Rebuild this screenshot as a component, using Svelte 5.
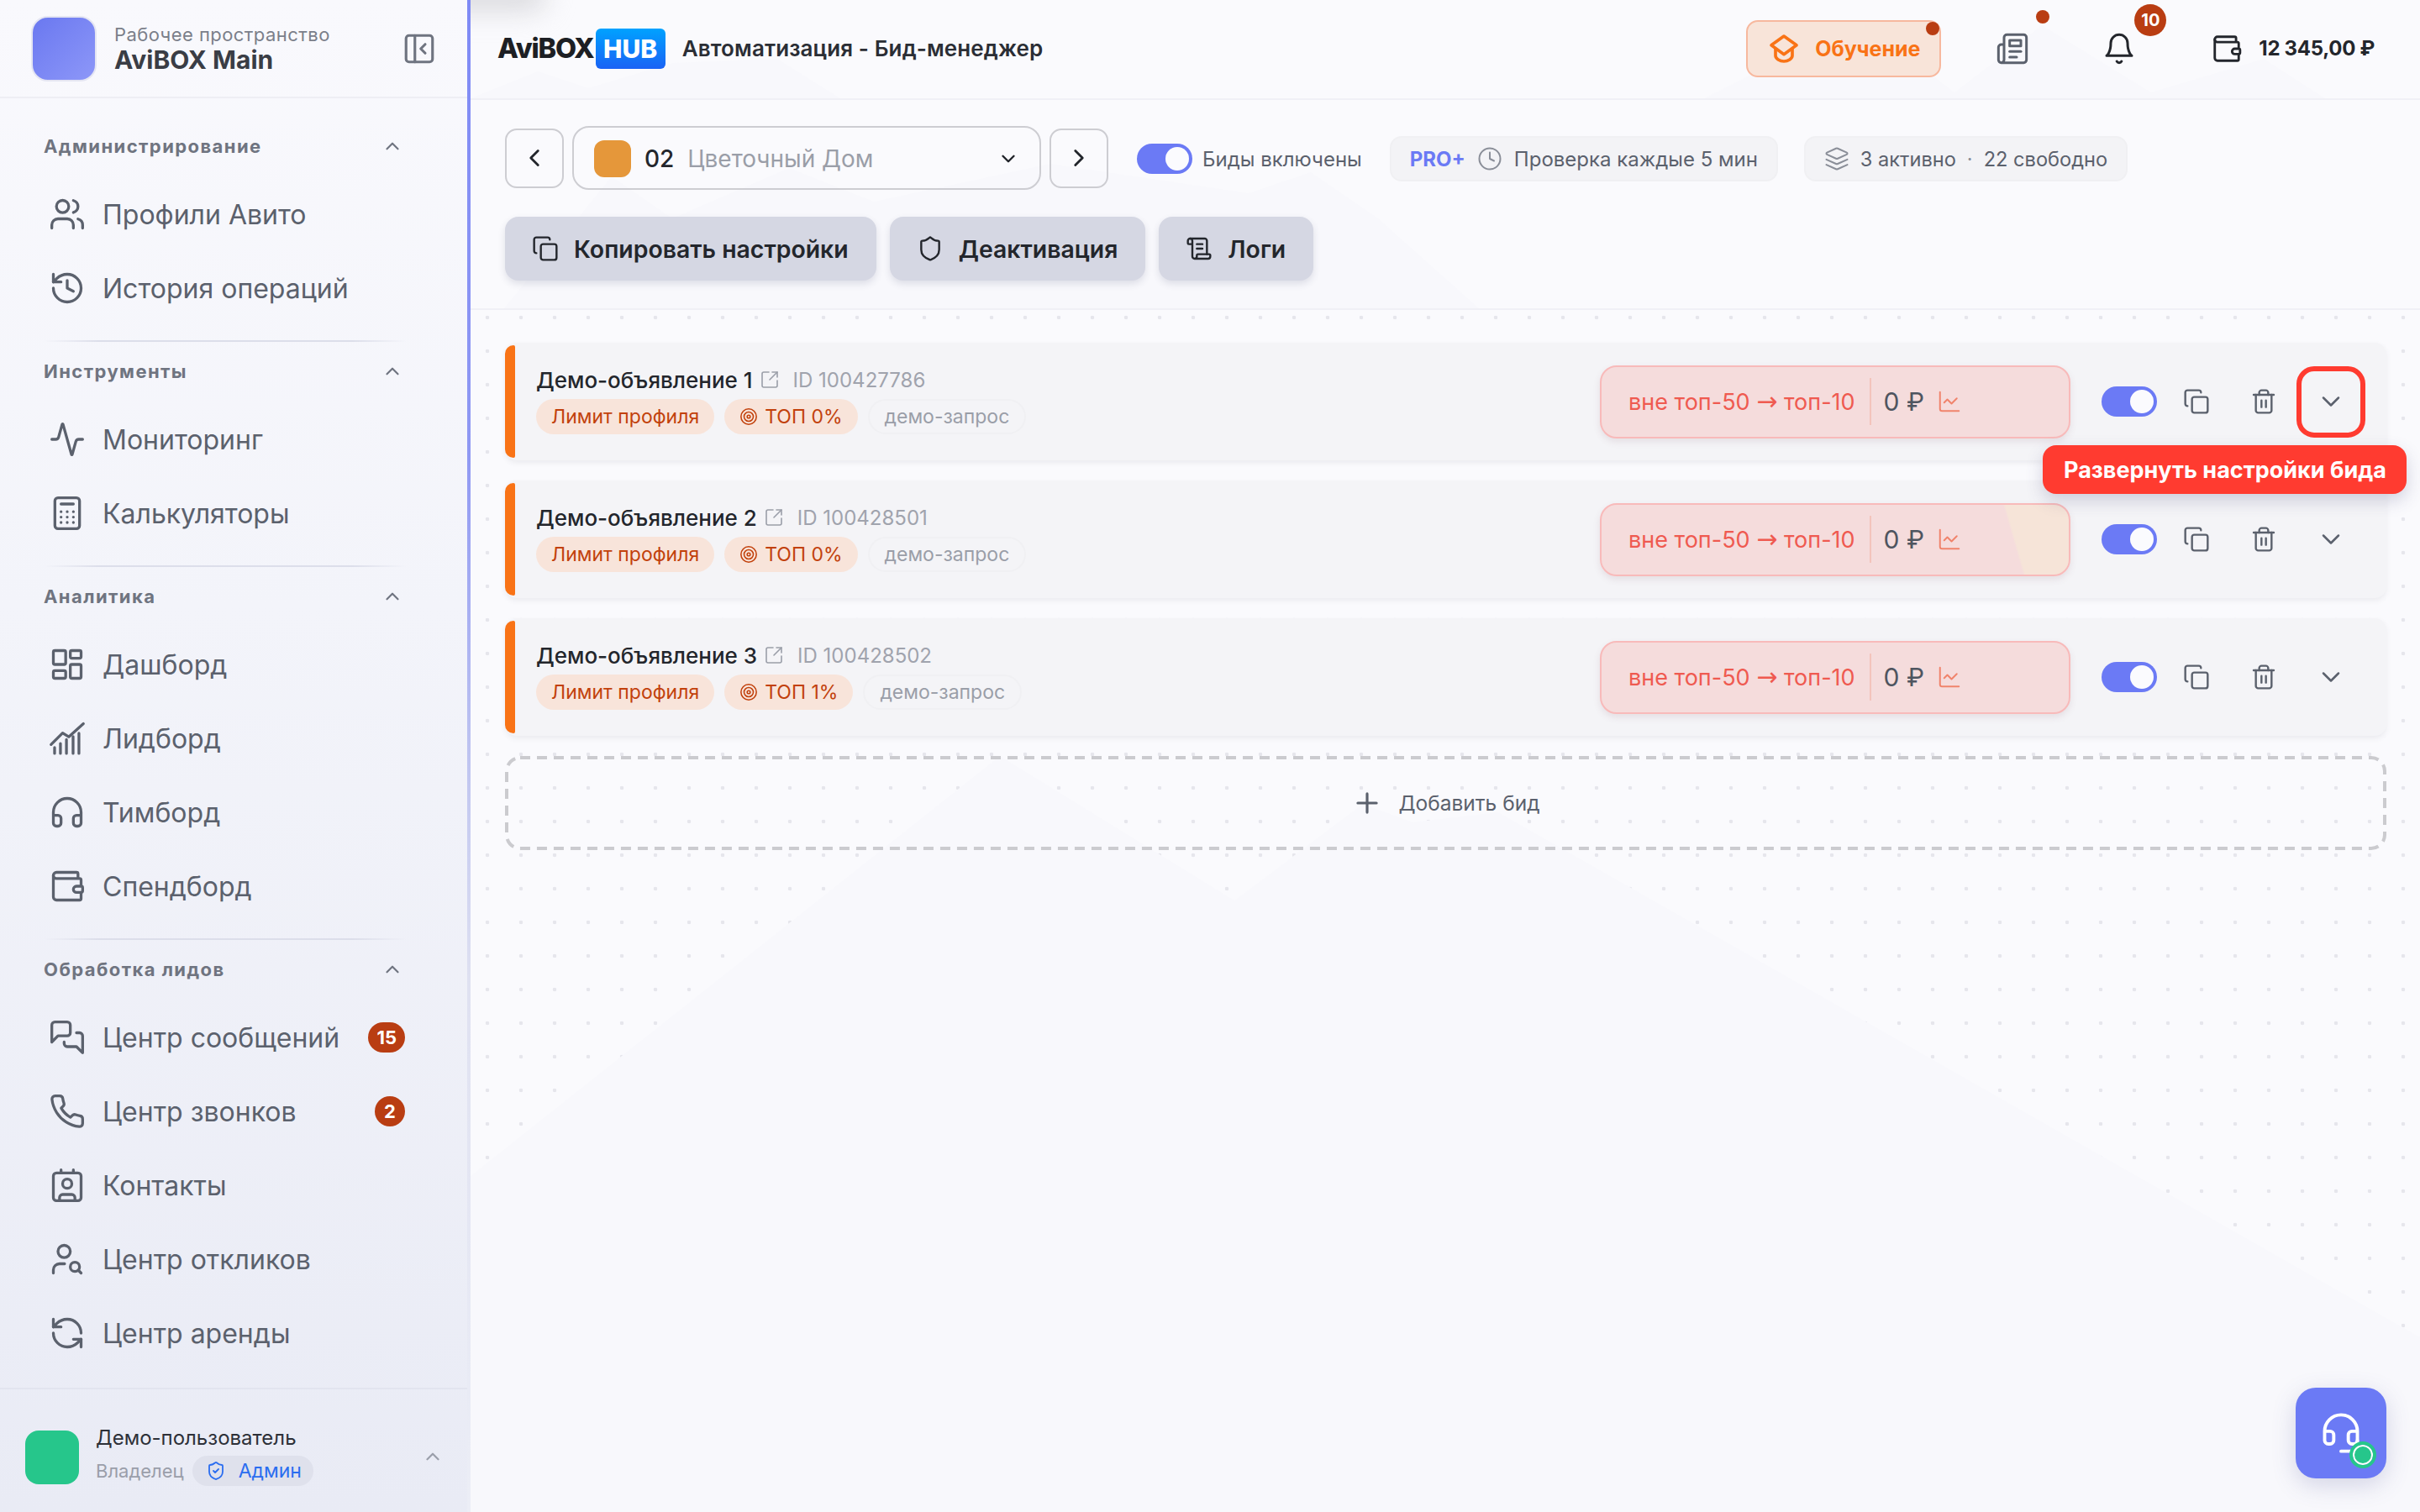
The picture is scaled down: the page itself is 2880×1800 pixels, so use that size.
<script lang="ts">
  const icons: Record<string, string> = {
    users: '<path d="M16 21v-2a4 4 0 0 0-4-4H6a4 4 0 0 0-4 4v2"/><circle cx="9" cy="7" r="4"/><path d="M22 21v-2a4 4 0 0 0-3-3.87"/><path d="M16 3.13a4 4 0 0 1 0 7.75"/>',
    history: '<path d="M3 12a9 9 0 1 0 9-9 9.75 9.75 0 0 0-6.74 2.74L3 8"/><path d="M3 3v5h5"/><path d="M12 7v5l4 2"/>',
    activity: '<path d="M22 12h-2.48a2 2 0 0 0-1.93 1.46l-2.35 8.36a.25.25 0 0 1-.48 0L9.24 2.18a.25.25 0 0 0-.48 0l-2.35 8.36A2 2 0 0 1 4.49 12H2"/>',
    calc: '<rect x="4" y="2" width="16" height="20" rx="2"/><path d="M8 6h8"/><path d="M8 11h.01M12 11h.01M16 11h.01M8 14.5h.01M12 14.5h.01M16 14.5h.01M8 18h.01M12 18h.01M16 18h.01"/>',
    dash: '<rect x="3" y="3" width="8" height="9" rx="1"/><rect x="14" y="3" width="7" height="5" rx="1"/><rect x="14" y="12" width="7" height="9" rx="1"/><rect x="3" y="16" width="8" height="5" rx="1"/>',
    lead: '<path d="M1.5 16 9 8.5l4 2.5 9.5-8.5"/><path d="M3.8 21.8V18M7.6 21.8v-6.5M11.5 21.8v-9M15.8 21.8v-11M19.6 21.8V8.7"/>',
    head: '<path d="M3 14h3a2 2 0 0 1 2 2v3a2 2 0 0 1-2 2H5a2 2 0 0 1-2-2v-7a9 9 0 0 1 18 0v7a2 2 0 0 1-2 2h-1a2 2 0 0 1-2-2v-3a2 2 0 0 1 2-2h3"/>',
    wallet: '<path d="M19 7V4a1 1 0 0 0-1-1H5a2 2 0 0 0 0 4h15a1 1 0 0 1 1 1v4h-3a2 2 0 0 0 0 4h3a1 1 0 0 0 1-1v-2a1 1 0 0 0-1-1"/><path d="M3 5v14a2 2 0 0 0 2 2h15a1 1 0 0 0 1-1v-4"/>',
    chat: '<path d="M14 9a2 2 0 0 1-2 2H6l-4 4V4a2 2 0 0 1 2-2h8a2 2 0 0 1 2 2z"/><path d="M18 9h2a2 2 0 0 1 2 2v11l-4-4h-6a2 2 0 0 1-2-2v-1"/>',
    phone: '<path d="M22 16.92v3a2 2 0 0 1-2.18 2 19.79 19.79 0 0 1-8.63-3.07 19.5 19.5 0 0 1-6-6 19.79 19.79 0 0 1-3.07-8.67A2 2 0 0 1 4.11 2h3a2 2 0 0 1 2 1.72 12.84 12.84 0 0 0 .7 2.81 2 2 0 0 1-.45 2.11L8.09 9.91a16 16 0 0 0 6 6l1.27-1.27a2 2 0 0 1 2.11-.45 12.84 12.84 0 0 0 2.81.7A2 2 0 0 1 22 16.92z"/>',
    contact: '<path d="M16 2v2"/><path d="M8 2v2"/><rect x="3" y="4" width="18" height="18" rx="2"/><circle cx="12" cy="11" r="3"/><path d="M7 22v-2a2 2 0 0 1 2-2h6a2 2 0 0 1 2 2v2"/>',
    usersearch: '<circle cx="10" cy="7" r="4"/><path d="M10.3 15H7a4 4 0 0 0-4 4v2"/><circle cx="17" cy="17" r="3"/><path d="m21 21-1.9-1.9"/>',
    refresh: '<path d="M21 12a9 9 0 0 0-9-9 9.75 9.75 0 0 0-6.74 2.74L3 8"/><path d="M3 3v5h5"/><path d="M3 12a9 9 0 0 0 9 9 9.75 9.75 0 0 0 6.74-2.74L21 16"/><path d="M16 16h5v5"/>',
    panel: '<rect x="3" y="3" width="18" height="18" rx="2"/><path d="M9 3v18"/><path d="m16 15-3-3 3-3"/>',
    up: '<path d="m6 15 6-6 6 6"/>',
    down: '<path d="m6 9 6 6 6-6"/>',
    left: '<path d="m15 18-6-6 6-6"/>',
    right: '<path d="m9 18 6-6-6-6"/>',
    cap: '<path d="M12 3 21 9.5 12 16 3 9.5Z"/><path d="M6 12v5c0 2 3 4 6 4s6-2 6-4v-5"/>',
    news: '<path d="M4 22h16a2 2 0 0 0 2-2V4a2 2 0 0 0-2-2H8a2 2 0 0 0-2 2v16a2 2 0 0 1-2 2Zm0 0a2 2 0 0 1-2-2v-9c0-1.1.9-2 2-2h2"/><path d="M18 14h-8"/><path d="M15 18h-5"/><path d="M10 6h8v4h-8V6Z"/>',
    bell: '<path d="M6 8a6 6 0 0 1 12 0c0 7 3 9 3 9H3s3-2 3-9"/><path d="M10.3 21a1.94 1.94 0 0 0 3.4 0"/>',
    copy: '<rect x="8" y="8" width="14" height="14" rx="2"/><path d="M4 16c-1.1 0-2-.9-2-2V4c0-1.1.9-2 2-2h10c1.1 0 2 .9 2 2"/>',
    shield: '<path d="M20 13c0 5-3.5 7.5-7.66 8.95a1 1 0 0 1-.67-.01C7.5 20.5 4 18 4 13V6a1 1 0 0 1 1-1c2 0 4.5-1.2 6.24-2.72a1.17 1.17 0 0 1 1.52 0C14.51 3.81 17 5 19 5a1 1 0 0 1 1 1z"/>',
    shieldcheck: '<path d="M20 13c0 5-3.5 7.5-7.66 8.95a1 1 0 0 1-.67-.01C7.5 20.5 4 18 4 13V6a1 1 0 0 1 1-1c2 0 4.5-1.2 6.24-2.72a1.17 1.17 0 0 1 1.52 0C14.51 3.81 17 5 19 5a1 1 0 0 1 1 1z"/><path d="m9 12 2 2 4-4"/>',
    scroll: '<path d="M15 12h-5"/><path d="M15 8h-5"/><path d="M19 17V5a2 2 0 0 0-2-2H4"/><path d="M8 21h12a2 2 0 0 0 2-2v-1a1 1 0 0 0-1-1H11a1 1 0 0 0-1 1v1a2 2 0 1 1-4 0V5a2 2 0 1 0-4 0v2a1 1 0 0 0 1 1h3"/>',
    clock: '<circle cx="12" cy="12" r="10"/><path d="M12 6v6l4 2"/>',
    layers: '<path d="m12.83 2.18a2 2 0 0 0-1.66 0L2.6 6.08a1 1 0 0 0 0 1.83l8.58 3.91a2 2 0 0 0 1.66 0l8.58-3.9a1 1 0 0 0 0-1.83z"/><path d="m22 17.65-9.17 4.16a2 2 0 0 1-1.66 0L2 17.65"/><path d="m22 12.65-9.17 4.16a2 2 0 0 1-1.66 0L2 12.65"/>',
    external: '<path d="M21 13v6a2 2 0 0 1-2 2H5a2 2 0 0 1-2-2V5a2 2 0 0 1 2-2h6"/><path d="m21 3-9 9"/><path d="M15 3h6v6"/>',
    target: '<circle cx="12" cy="12" r="10"/><circle cx="12" cy="12" r="6"/><circle cx="12" cy="12" r="2"/>',
    chart: '<path d="M3 3v16a2 2 0 0 0 2 2h16"/><path d="m19 9-5 5-4-4-3 3"/>',
    trash: '<path d="M3 6h18"/><path d="M19 6v14c0 1-1 2-2 2H7c-1 0-2-1-2-2V6"/><path d="M8 6V4c0-1 1-2 2-2h4c1 0 2 1 2 2v2"/><path d="M10 11v6"/><path d="M14 11v6"/>',
    plus: '<path d="M5 12h14"/><path d="M12 5v14"/>',
    headset: '<path d="M3 11h3a2 2 0 0 1 2 2v3a2 2 0 0 1-2 2H5a2 2 0 0 1-2-2v-5Zm0 0a9 9 0 1 1 18 0m0 0v5a2 2 0 0 1-2 2h-1a2 2 0 0 1-2-2v-3a2 2 0 0 1 2-2h3Z"/><path d="M21 16v2a4 4 0 0 1-4 4h-5"/>'
  };

  const sections = [
    {
      title: "Администрирование",
      items: [
        { label: "Профили Авито", icon: "users" },
        { label: "История операций", icon: "history" }
      ]
    },
    {
      title: "Инструменты",
      items: [
        { label: "Мониторинг", icon: "activity" },
        { label: "Калькуляторы", icon: "calc" }
      ]
    },
    {
      title: "Аналитика",
      items: [
        { label: "Дашборд", icon: "dash" },
        { label: "Лидборд", icon: "lead" },
        { label: "Тимборд", icon: "head" },
        { label: "Спендборд", icon: "wallet" }
      ]
    },
    {
      title: "Обработка лидов",
      items: [
        { label: "Центр сообщений", icon: "chat", badge: "15" },
        { label: "Центр звонков", icon: "phone", badge: "2" },
        { label: "Контакты", icon: "contact" },
        { label: "Центр откликов", icon: "usersearch" },
        { label: "Центр аренды", icon: "refresh" }
      ]
    }
  ];

  const bids = [
    { title: "Демо-объявление 1", id: "100427786", top: "ТОП 0%", open: true },
    { title: "Демо-объявление 2", id: "100428501", top: "ТОП 0%", glare: true },
    { title: "Демо-объявление 3", id: "100428502", top: "ТОП 1%" }
  ];
</script>

{#snippet icon(name: string, size: number, cls = "", sw = 1.8)}
  <svg class={cls} width={size} height={size} viewBox="0 0 24 24" fill="none" stroke="currentColor" stroke-width={sw} stroke-linecap="round" stroke-linejoin="round" aria-hidden="true">{@html icons[name]}</svg>
{/snippet}

{#snippet toggle()}
  <span class="toggle"><span class="thumb"></span></span>
{/snippet}

<div class="page">
  <aside class="sidebar">
    <div class="workspace">
      <div class="ws-logo"></div>
      <div class="ws-text">
        <span class="ws-label">Рабочее пространство</span>
        <span class="ws-name">AviBOX Main</span>
      </div>
      <button class="ws-collapse" type="button">{@render icon("panel", 42)}</button>
    </div>

    <nav class="nav">
      {#each sections as section, i}
        {#if i > 0}<div class="nav-divider"></div>{/if}
        <div class="nav-head">
          <span>{section.title}</span>
          {@render icon("up", 26, "", 2)}
        </div>
        {#each section.items as item}
          <div class="nav-item">
            {@render icon(item.icon, 44)}
            <span class="nav-label">{item.label}</span>
            {#if item.badge}<span class="nav-badge">{item.badge}</span>{/if}
          </div>
        {/each}
      {/each}
    </nav>

    <div class="account">
      <div class="avatar"></div>
      <div class="account-text">
        <span class="account-name">Демо-пользователь</span>
        <div class="account-role">
          <span>Владелец</span>
          <span class="role-pill">{@render icon("shieldcheck", 24)}Админ</span>
        </div>
      </div>
      {@render icon("up", 26, "account-chev", 2)}
    </div>
  </aside>

  <div class="main">
    <!-- faint mountains behind everything in the content column -->
    <svg class="mountains" width="2320" height="1800" viewBox="560 0 2320 1800" aria-hidden="true">
      <polygon points="560,117 640,85 700,105 800,75 925,70 1000,117" />
      <polygon points="2028,117 2082,90 2300,90 2326,110 2430,30 2560,110 2694,70 2767,117" />
      <polygon points="600,367 728,210 800,260 939,200 1040,240 1250,195 1486,230 1560,205 1640,260 1760,367" />
      <polygon points="560,1800 560,1400 1190,900 1469,1072 1622,957 1681,979 1783,967 2880,1592 2880,1800" />
    </svg>
    <div class="blur-top"></div>

    <header class="topbar">
      <div class="logo"><span class="logo-text">AviBOX</span><span class="logo-hub">HUB</span></div>
      <div class="page-title">Автоматизация - Бид-менеджер</div>
      <div class="top-right">
        <button class="learn" type="button">
          {@render icon("cap", 40, "", 2.2)}
          <span>Обучение</span>
          <span class="learn-dot"></span>
        </button>
        <span class="top-icon news">{@render icon("news", 40)}<span class="news-dot"></span></span>
        <span class="top-icon">{@render icon("bell", 40)}<span class="bell-badge">10</span></span>
        <span class="balance">{@render icon("wallet", 38)}12 345,00 ₽</span>
      </div>
    </header>

    <section class="toolbar">
      <div class="tool-row">
        <button class="nav-btn" type="button">{@render icon("left", 34, "", 2)}</button>
        <div class="profile-select">
          <span class="profile-color"></span>
          <span class="profile-num">02</span>
          <span class="profile-name">Цветочный Дом</span>
          {@render icon("down", 26, "select-chev", 2.2)}
        </div>
        <button class="nav-btn" type="button">{@render icon("right", 34, "", 2)}</button>
        <div class="master-toggle">
          {@render toggle()}
          <span>Биды включены</span>
        </div>
        <div class="info-pill">
          <span class="pro">PRO+</span>
          {@render icon("clock", 30, "pill-icon", 1.6)}
          <span>Проверка каждые 5 мин</span>
        </div>
        <div class="info-pill second">
          {@render icon("layers", 30, "pill-icon", 1.6)}
          <span>3 активно</span>
          <span class="sep">·</span>
          <span>22 свободно</span>
        </div>
      </div>
      <div class="tool-row actions">
        <button class="action-btn" type="button">{@render icon("copy", 32)}Копировать настройки</button>
        <button class="action-btn" type="button">{@render icon("shield", 32)}Деактивация</button>
        <button class="action-btn" type="button">{@render icon("scroll", 32)}Логи</button>
      </div>
    </section>

    <section class="bids">
      {#each bids as bid}
        <article class="bid">
          <span class="bid-bar"></span>
          <div class="bid-info">
            <div class="bid-title">
              <span>{bid.title}</span>
              {@render icon("external", 24, "ext", 1.6)}
              <span class="bid-id">ID {bid.id}</span>
            </div>
            <div class="bid-chips">
              <span class="chip warn">Лимит профиля</span>
              <span class="chip warn">{@render icon("target", 22, "", 1.7)}{bid.top}</span>
              <span class="chip query">демо-запрос</span>
            </div>
          </div>
          <div class="delta" class:glare={bid.glare}>
            <span class="delta-pos">вне топ-50 <span class="arrow">→</span> топ-10</span>
            <span class="delta-sep"></span>
            <span class="delta-cost">0 ₽</span>
            {@render icon("chart", 30, "delta-chart", 1.6)}
          </div>
          {@render toggle()}
          <div class="bid-actions">
            <button class="bid-btn" type="button">{@render icon("copy", 32)}</button>
            <button class="bid-btn" type="button">{@render icon("trash", 32)}</button>
            <button class="bid-btn" class:hint={bid.open} type="button">{@render icon("down", 36, "", 1.7)}</button>
          </div>
          {#if bid.open}
            <div class="tooltip">Развернуть настройки бида</div>
          {/if}
        </article>
      {/each}

      <button class="add-bid" type="button">
        <svg class="add-border" width="100%" height="100%" aria-hidden="true"><rect x="2" y="2" rx="16" style="width: calc(100% - 4px); height: calc(100% - 4px)" /></svg>
        {@render icon("plus", 38, "", 2)}
        <span>Добавить бид</span>
      </button>
    </section>

    <button class="support" type="button">
      {@render icon("headset", 52, "", 1.8)}
      <span class="support-dot"></span>
    </button>
  </div>
</div>

<style>
  :global(body) {
    margin: 0;
    font-family: Inter, "Noto Sans", sans-serif;
    color: #1f2228;
  }

  button {
    font-family: inherit;
    border: 0;
    background: none;
    padding: 0;
    color: inherit;
  }

  svg {
    flex: none;
    display: block;
  }

  .page {
    display: flex;
    width: 2880px;
    height: 1800px;
    overflow: hidden;
    background: #fafafd;
  }

  /* ---- sidebar ---- */
  .sidebar {
    width: 556px;
    flex: none;
    display: flex;
    flex-direction: column;
    color: #5b616d;
    background: linear-gradient(180deg, #f9f9fd 0%, #f3f4fa 40%, #e9ebf5 100%);
    border-right: 4px solid;
    border-image: linear-gradient(180deg, #7f8af5 0%, #8f98f3 30%, #c3c8f0 52%, #dfe1f1 65%, #eceef6 100%) 1;
    position: relative;
    z-index: 2;
  }

  .workspace {
    height: 117px;
    box-sizing: border-box;
    flex: none;
    display: flex;
    align-items: center;
    padding: 0 36px 0 37px;
    gap: 21px;
    border-bottom: 2px solid #eeeef4;
  }

  .ws-logo {
    width: 78px;
    height: 78px;
    box-sizing: border-box;
    border-radius: 20px;
    border: 2px solid #e4e5f2;
    background: linear-gradient(135deg, #6a78f0, #8d97f8);
  }

  .ws-text {
    display: flex;
    flex-direction: column;
    flex: 1;
  }

  .ws-label {
    font-size: 22px;
    line-height: 26px;
    letter-spacing: 0.02em;
    color: #7b7f8a;
  }

  .ws-name {
    font-size: 30px;
    line-height: 34px;
    font-weight: 700;
    color: #3a3d45;
  }

  .ws-collapse {
    color: #6f7480;
  }

  .nav {
    flex: 1;
    padding: 37px 72px 0 52px;
  }

  .nav-head {
    height: 40px;
    margin-bottom: 17px;
    padding-right: 4px;
    display: flex;
    align-items: center;
    justify-content: space-between;
    font-size: 22px;
    font-weight: 700;
    letter-spacing: 0.065em;
    color: #6f7480;
  }

  .nav-item {
    height: 88px;
    display: flex;
    align-items: center;
    gap: 20px;
    padding: 0 2px 0 6px;
  }

  .nav-label {
    font-size: 32px;
    flex: 1;
  }

  .nav-badge {
    height: 36px;
    min-width: 36px;
    padding: 0 10px;
    box-sizing: border-box;
    border-radius: 18px;
    display: flex;
    align-items: center;
    justify-content: center;
    background: #b93d12;
    color: #fff;
    font-size: 22px;
    font-weight: 700;
  }

  .nav-divider {
    height: 2px;
    margin: 18px 0 15px;
    background: linear-gradient(90deg, transparent, #dcdeea 15%, #dcdeea 85%, transparent);
  }

  .account {
    height: 148px;
    box-sizing: border-box;
    flex: none;
    padding: 16px 28px 0 30px;
    display: flex;
    align-items: center;
    gap: 20px;
    border-top: 2px solid #e2e4ef;
  }

  .avatar {
    width: 64px;
    height: 64px;
    border-radius: 16px;
    background: #26c68b;
    flex: none;
  }

  .account-text {
    flex: 1;
    display: flex;
    flex-direction: column;
    gap: 4px;
    padding-bottom: 6px;
  }

  .account-name {
    font-size: 24px;
    line-height: 34px;
    color: #2d3038;
  }

  .account-role {
    display: flex;
    align-items: center;
    gap: 10px;
    font-size: 22px;
    color: #9a9eaa;
  }

  .role-pill {
    display: inline-flex;
    align-items: center;
    gap: 15px;
    height: 36px;
    padding: 0 14px 0 16px;
    border-radius: 18px;
    background: #dfe1ec;
    color: #2a6df0;
    font-size: 23px;
  }

  :global(.account-chev) {
    color: #9a9eaa;
    margin-top: -2px;
  }

  /* ---- main column ---- */
  .main {
    flex: 1;
    position: relative;
    display: flex;
    flex-direction: column;
    min-width: 0;
  }

  .main::before {
    content: "";
    position: absolute;
    inset: 368px 0 0 0;
    background-image: radial-gradient(circle, #e6e6ec 2px, transparent 2.6px);
    background-size: 40px 40px;
    background-position: 0 -10px;
  }

  .mountains {
    position: absolute;
    left: 0;
    top: 0;
    fill: #f8f8fc;
  }

  .blur-top {
    position: absolute;
    left: -80px;
    top: -22px;
    width: 170px;
    height: 34px;
    border-radius: 20px;
    background: #d8d8dc;
    filter: blur(16px);
  }

  .topbar {
    position: relative;
    height: 119px;
    box-sizing: border-box;
    flex: none;
    display: flex;
    align-items: center;
    padding: 0 54px 2px 32px;
    border-bottom: 2px solid #f0f0f6;
  }

  .logo {
    display: flex;
    align-items: center;
    gap: 2px;
  }

  .logo-text {
    font-size: 32.5px;
    font-weight: 800;
    letter-spacing: -0.035em;
    color: #1d1f24;
  }

  .logo-hub {
    width: 83px;
    height: 48px;
    border-radius: 6px;
    display: flex;
    align-items: center;
    justify-content: center;
    background: linear-gradient(180deg, #00a2ff, #1a62f5);
    color: #fff;
    font-size: 30px;
    font-weight: 800;
  }

  .page-title {
    margin-left: 20px;
    font-size: 26px;
    font-weight: 600;
    letter-spacing: 0.004em;
    color: #2b2e35;
  }

  .top-right {
    margin-left: auto;
    display: flex;
    align-items: center;
    gap: 43px;
  }

  .learn {
    position: relative;
    width: 232px;
    height: 68px;
    box-sizing: border-box;
    border: 2px solid #f7b89e;
    border-radius: 14px;
    background: #f8e4d9;
    display: flex;
    align-items: center;
    justify-content: center;
    gap: 17px;
    color: #f97316;
    font-size: 25px;
    font-weight: 700;
  }

  .learn-dot {
    position: absolute;
    top: 0;
    right: 0;
    width: 16px;
    height: 16px;
    border-radius: 50%;
    background: #b93d12;
  }

  .top-icon {
    position: relative;
    width: 84px;
    display: flex;
    justify-content: center;
    color: #23262c;
  }

  .top-icon.news {
    color: #5b616d;
  }

  .news-dot {
    position: absolute;
    left: 70px;
    top: -26px;
    width: 16px;
    height: 16px;
    border-radius: 50%;
    background: #b93d12;
  }

  .bell-badge {
    position: absolute;
    left: 60px;
    top: -33px;
    width: 38px;
    height: 38px;
    border-radius: 50%;
    background: #b93d12;
    color: #fff;
    font-size: 20px;
    font-weight: 700;
    display: flex;
    align-items: center;
    justify-content: center;
  }

  .balance {
    display: flex;
    align-items: center;
    gap: 19px;
    padding-left: 24px;
    font-size: 24px;
    font-weight: 700;
    letter-spacing: -0.012em;
    color: #23262c;
  }

  .toolbar {
    position: relative;
    flex: none;
    height: 250px;
    box-sizing: border-box;
    padding: 31px 41px 0;
    display: flex;
    flex-direction: column;
    gap: 32px;
    border-bottom: 2px solid #f0f0f6;
  }

  .tool-row {
    display: flex;
    align-items: center;
    height: 76px;
  }

  .nav-btn {
    width: 70px;
    height: 71px;
    box-sizing: border-box;
    border: 2px solid #cdcdd2;
    border-radius: 14px;
    display: flex;
    align-items: center;
    justify-content: center;
    color: #23262c;
  }

  .profile-select {
    width: 558px;
    height: 76px;
    box-sizing: border-box;
    margin: 0 10px;
    padding: 2px 24px 0;
    border: 2px solid #cdcdd2;
    border-radius: 20px;
    display: flex;
    align-items: center;
    font-size: 28px;
  }

  .profile-color {
    width: 44px;
    height: 44px;
    border-radius: 12px;
    background: #e5973a;
    margin-right: 16px;
  }

  .profile-num {
    font-weight: 500;
    color: #23262c;
    margin-right: 16px;
  }

  .profile-name {
    flex: 1;
    color: #9a9ea8;
  }

  .master-toggle {
    display: flex;
    align-items: center;
    gap: 12px;
    margin: 2px 33px 0 34px;
    font-size: 24px;
    color: #5b616d;
  }

  .toggle {
    width: 66px;
    height: 36px;
    flex: none;
    box-sizing: border-box;
    padding: 4px;
    border-radius: 18px;
    background: #6b7af5;
    display: flex;
    justify-content: flex-end;
  }

  .thumb {
    width: 28px;
    height: 28px;
    border-radius: 50%;
    background: #fbfbfe;
  }

  .info-pill {
    height: 54px;
    box-sizing: border-box;
    margin-top: 2px;
    padding: 0 22px;
    border: 2px solid #f0f0f3;
    border-radius: 14px;
    background: #f3f3f6;
    display: flex;
    align-items: center;
    gap: 14px;
    font-size: 24px;
    color: #5b616d;
  }

  .info-pill.second {
    margin-left: 31px;
    padding: 0 22px;
    gap: 13px;
    font-size: 23.6px;
  }

  .pro {
    color: #6b7af5;
    font-weight: 700;
    font-size: 24px;
  }

  :global(.pill-icon) {
    color: #8a8e98;
  }

  .sep {
    color: #8a8e98;
  }

  .actions {
    gap: 16px;
  }

  .action-btn {
    height: 76px;
    padding: 0 33px 0 32px;
    border-radius: 16px;
    background: #d5d7e3;
    display: flex;
    align-items: center;
    gap: 18px;
    font-size: 28.4px;
    font-weight: 600;
    color: #23262c;
    box-shadow: 0 4px 8px rgba(60, 65, 100, 0.14);
  }

  /* ---- bid cards ---- */
  .bids {
    position: relative;
    padding: 39px 40px 0 41px;
    display: flex;
    flex-direction: column;
    gap: 24px;
  }

  .bid {
    position: relative;
    height: 140px;
    display: flex;
    align-items: center;
    border-radius: 14px;
    background: #f4f4f7;
    box-shadow: 0 3px 6px rgba(60, 60, 80, 0.08);
  }

  .bid-bar {
    width: 12px;
    align-self: stretch;
    margin: 3px 0;
    border-radius: 10px 2px 2px 10px;
    background: #f97316;
  }

  .bid-info {
    flex: 1;
    padding: 0 0 5px 25px;
    display: flex;
    flex-direction: column;
    gap: 5px;
  }

  .bid-title {
    height: 36px;
    display: flex;
    align-items: center;
    font-size: 26px;
    font-weight: 500;
    color: #23262c;
  }

  :global(.ext) {
    margin-left: 8px;
    color: #9a9ea8;
  }

  .bid-id {
    margin-left: 16px;
    font-size: 24px;
    font-weight: 400;
    color: #a0a3ad;
  }

  .bid-chips {
    display: flex;
    gap: 12px;
    height: 42px;
  }

  .chip {
    display: inline-flex;
    align-items: center;
    gap: 8px;
    padding: 0 18px;
    border-radius: 21px;
    font-size: 23px;
  }

  .chip.warn {
    background: #f8e4da;
    color: #c2410c;
  }

  .chip.query {
    box-sizing: border-box;
    border: 2px solid #f0f0f3;
    color: #9a9ea8;
  }

  .delta {
    width: 560px;
    height: 87px;
    box-sizing: border-box;
    margin-right: 37px;
    padding: 0 32px;
    border: 2px solid #f8baba;
    border-radius: 20px;
    background: #f5dcdc;
    display: flex;
    align-items: center;
    box-shadow: 0 4px 8px rgba(120, 70, 90, 0.12);
  }

  .delta.glare {
    background: linear-gradient(74deg, #f5dcdc 86.5%, #f6e4d8 87%);
  }

  .delta-pos {
    font-size: 27px;
    color: #ef5a50;
  }

  .arrow {
    font-family: "DejaVu Sans", sans-serif;
    font-size: 30px;
    line-height: 1;
  }

  .delta-sep {
    width: 2px;
    height: 56px;
    margin: 0 15px 0 17px;
    background: #f3c4bc;
  }

  .delta-cost {
    font-size: 30px;
    color: #4f5560;
    margin-right: 15px;
  }

  :global(.delta-chart) {
    color: #f0846c;
  }

  .bid-actions {
    display: flex;
    margin: 0 26px 0 7px;
  }

  .bid-btn {
    width: 80px;
    height: 83px;
    box-sizing: border-box;
    display: flex;
    align-items: center;
    justify-content: center;
    color: #5b616d;
  }

  .bid-btn.hint {
    outline: 6px solid #ff3b30;
    outline-offset: -5px;
    border-radius: 20px;
  }

  .tooltip {
    position: absolute;
    right: -24px;
    top: 122px;
    z-index: 3;
    height: 58px;
    padding: 0 24px 0 25px;
    border-radius: 16px;
    background: #ff3b30;
    color: #fff;
    font-size: 27px;
    font-weight: 700;
    display: flex;
    align-items: center;
    white-space: nowrap;
    box-shadow: 0 8px 20px rgba(70, 70, 120, 0.22);
  }

  .add-bid {
    position: relative;
    height: 112px;
    border-radius: 16px;
    display: flex;
    align-items: center;
    justify-content: center;
    gap: 18px;
    font-size: 24.5px;
    color: #5b616d;
  }

  .add-border {
    position: absolute;
    inset: 0;
    fill: none;
    stroke: #cbcbcf;
    stroke-width: 4;
    stroke-dasharray: 12 8;
  }

  .support {
    position: absolute;
    left: 2172px;
    top: 1652px;
    width: 108px;
    height: 108px;
    border-radius: 24px;
    background: #6b7af5;
    color: #fff;
    display: flex;
    align-items: center;
    justify-content: center;
    box-shadow: 0 8px 28px rgba(80, 85, 150, 0.22);
  }

  .support-dot {
    position: absolute;
    left: 68px;
    top: 68px;
    width: 24px;
    height: 24px;
    box-sizing: border-box;
    border-radius: 50%;
    background: #26c68b;
    border: 2px solid #fff;
    outline: 4px solid #26c68b;
  }
</style>
